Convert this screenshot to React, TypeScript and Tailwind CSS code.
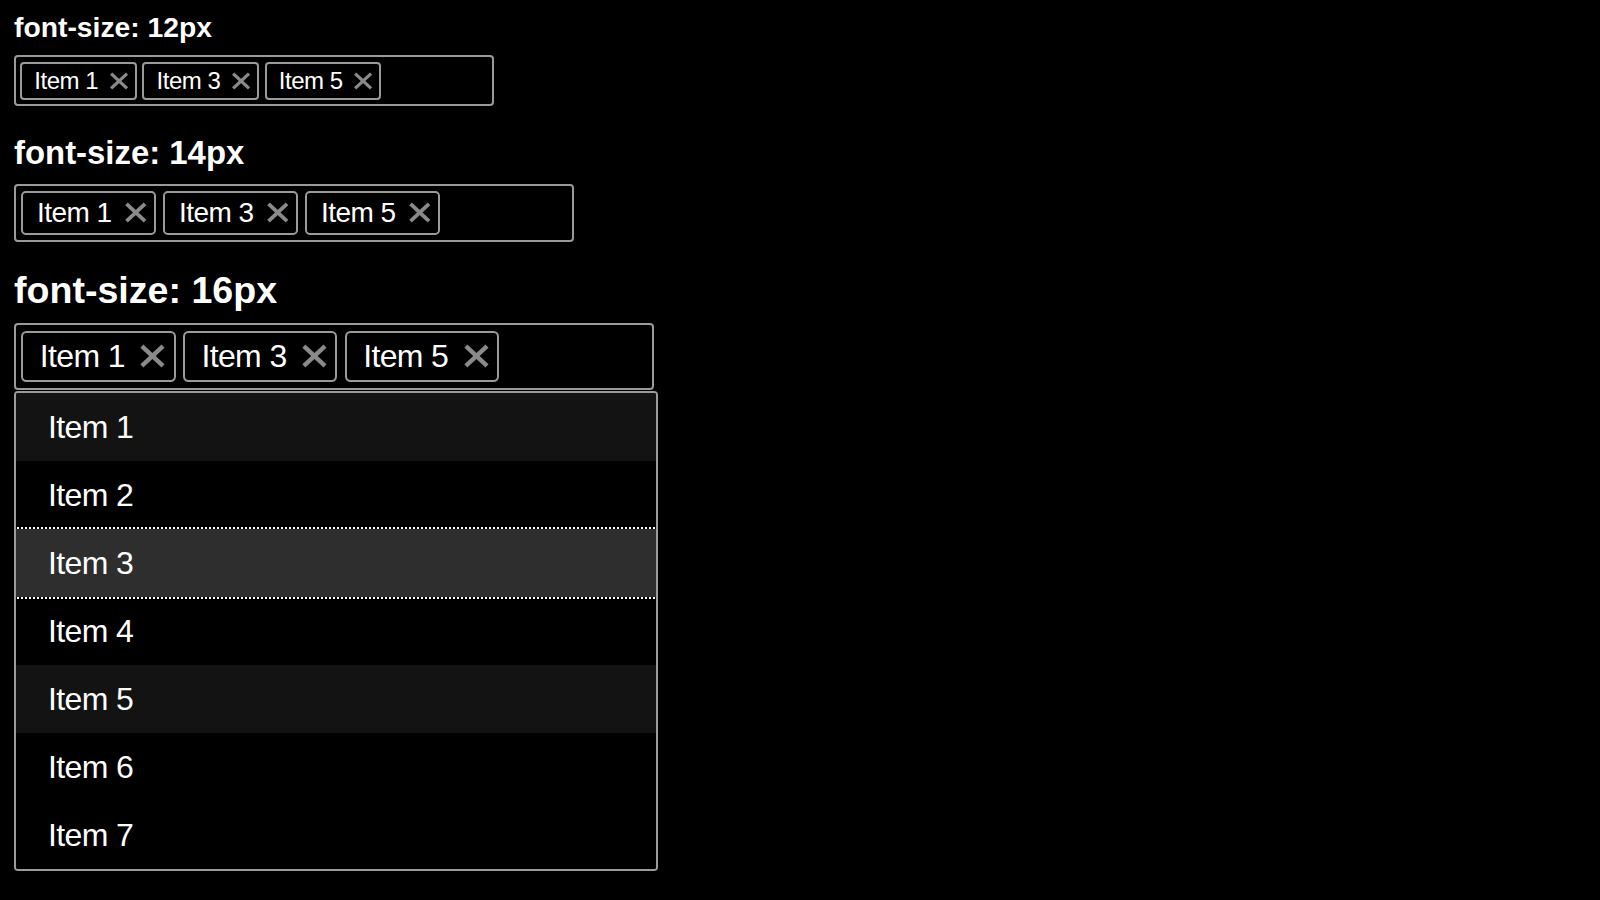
import React from 'react';

const FONT = { fontFamily: '"Liberation Sans", Arial, Helvetica, sans-serif' };

// little grey cross used on each chip
const Cross = () => (
  <svg viewBox="0 0 19 17" className="w-[0.84em] h-[0.75em] shrink-0">
    <path d="M2 1.5 L17 15.5 M17 1.5 L2 15.5" stroke="#8a8a8a" strokeWidth="3.1" fill="none" />
  </svg>
);

const Chip = ({ label }: { label: string }) => (
  <div className="flex items-center h-[1.58em] border-2 border-[#9a9a9a] rounded-[0.17em] pl-[0.51em] pr-[0.24em] gap-[0.45em] leading-none">
    <span className="tracking-[-0.02em]">{label}</span>
    <Cross />
  </div>
);

const TagBox = ({ className }: { className: string }) => (
  <div className={`flex items-center gap-[0.23em] border-2 border-[#9a9a9a] rounded-[4px] py-[0.19em] pl-[0.17em] pr-[0.19em] ${className}`}>
    <Chip label="Item 1" />
    <Chip label="Item 3" />
    <Chip label="Item 5" />
  </div>
);

const OPTIONS = [
  { label: 'Item 1', state: 'selected' },
  { label: 'Item 2', state: '' },
  { label: 'Item 3', state: 'active' },
  { label: 'Item 4', state: '' },
  { label: 'Item 5', state: 'selected' },
  { label: 'Item 6', state: '' },
  { label: 'Item 7', state: '' },
];

const rowStyle = (state: string) => {
  switch (state) {
    case 'selected': return 'bg-[#131313]';
    case 'active': return 'bg-[#2e2e2e] outline-2 outline-dotted outline-white relative z-10';
    default: return 'bg-black';
  }
};

export default function App() {
  return (
    <div className="min-h-screen bg-black text-white pl-[14px] pt-[12.6px]" style={FONT}>
      {/* 12px */}
      <div className="text-[24px]">
        <h3 className="text-[28.3px] leading-none font-bold">font-size: 12px</h3>
        <TagBox className="w-[480px] mt-[14.4px]" />
      </div>

      {/* 14px */}
      <div className="text-[28px] mt-[30.7px]">
        <h3 className="text-[32.9px] leading-none font-bold">font-size: 14px</h3>
        <TagBox className="w-[560px] mt-[13.7px]" />
      </div>

      {/* 16px, list open */}
      <div className="text-[32px] mt-[29.7px]">
        <h3 className="text-[37.6px] leading-none font-bold">font-size: 16px</h3>
        <TagBox className="w-[640px] mt-[13.2px]" />
        <ul className="w-[644px] mt-[1.3px] border-2 border-[#9a9a9a] rounded-[4px] overflow-hidden">
          {OPTIONS.map((o) => (
            <li key={o.label} className={`h-[68px] flex items-center pl-[32px] leading-none tracking-[-0.02em] ${rowStyle(o.state)}`}>
              {o.label}
            </li>
          ))}
        </ul>
      </div>
    </div>
  );
}
